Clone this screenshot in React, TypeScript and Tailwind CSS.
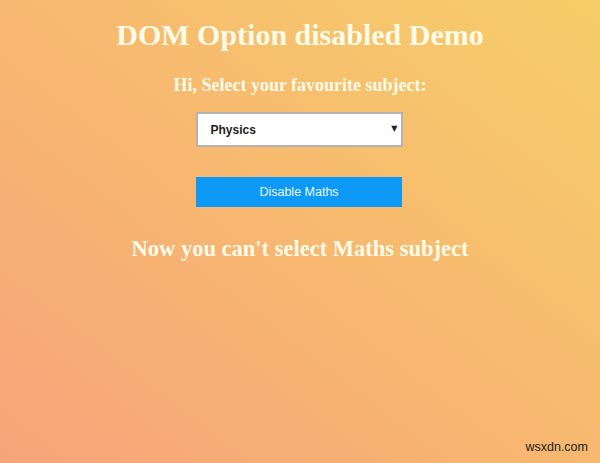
import { useState } from "react";

const subjects = ["Physics", "Maths", "Chemistry", "Biology"];

export default function App() {
  const [subject, setSubject] = useState("Physics");
  const [disabled, setDisabled] = useState(true);

  return (
    <div className="relative w-full min-h-[463px] h-screen bg-[linear-gradient(to_top_right,#f7a47b_0%,#f7b870_50%,#f6ce69_100%)] text-[#fffbe8] font-['Liberation_Serif',serif] flex flex-col items-center">
      <h1 className="mt-[19px] text-[30px] leading-[32px] font-bold">
        DOM Option disabled Demo
      </h1>
      <h3 className="mt-[23px] text-[18px] leading-[22px] font-bold">
        Hi, Select your favourite subject:
      </h3>

      {/* Subject dropdown */}
      <div className="relative mt-[16px] w-[207px] h-[35px] -translate-x-[1px]">
        <select
          value={subject}
          onChange={(e) => setSubject(e.target.value)}
          className="appearance-none w-full h-full bg-white border-2 border-[#b3b3b3] pl-[13px] font-['Liberation_Sans',Arial,sans-serif] text-[12px] font-bold text-[#222] outline-none"
        >
          {subjects.map((s) => (
            <option key={s} value={s} disabled={disabled && s === "Maths"}>
              {s}
            </option>
          ))}
        </select>
        <span className="pointer-events-none absolute right-[5px] top-[11px] text-[8px] text-[#222] font-['DejaVu_Sans',sans-serif]">
          ▼
        </span>
      </div>

      <button
        onClick={() => setDisabled(true)}
        className="mt-[30px] w-[206px] h-[30px] bg-[#0c9af6] font-['Liberation_Sans',Arial,sans-serif] text-[12.5px] text-[#eef6ff] -translate-x-[1px]"
      >
        Disable Maths
      </button>

      <h2 className="mt-[29px] text-[22.5px] leading-[26px] font-bold">
        {disabled ? "Now you can't select Maths subject" : ""}
      </h2>

      <span className="absolute right-[12px] bottom-[6px] font-['Liberation_Sans',Arial,sans-serif] text-[12.5px] text-[#222]">
        wsxdn.com
      </span>
    </div>
  );
}
